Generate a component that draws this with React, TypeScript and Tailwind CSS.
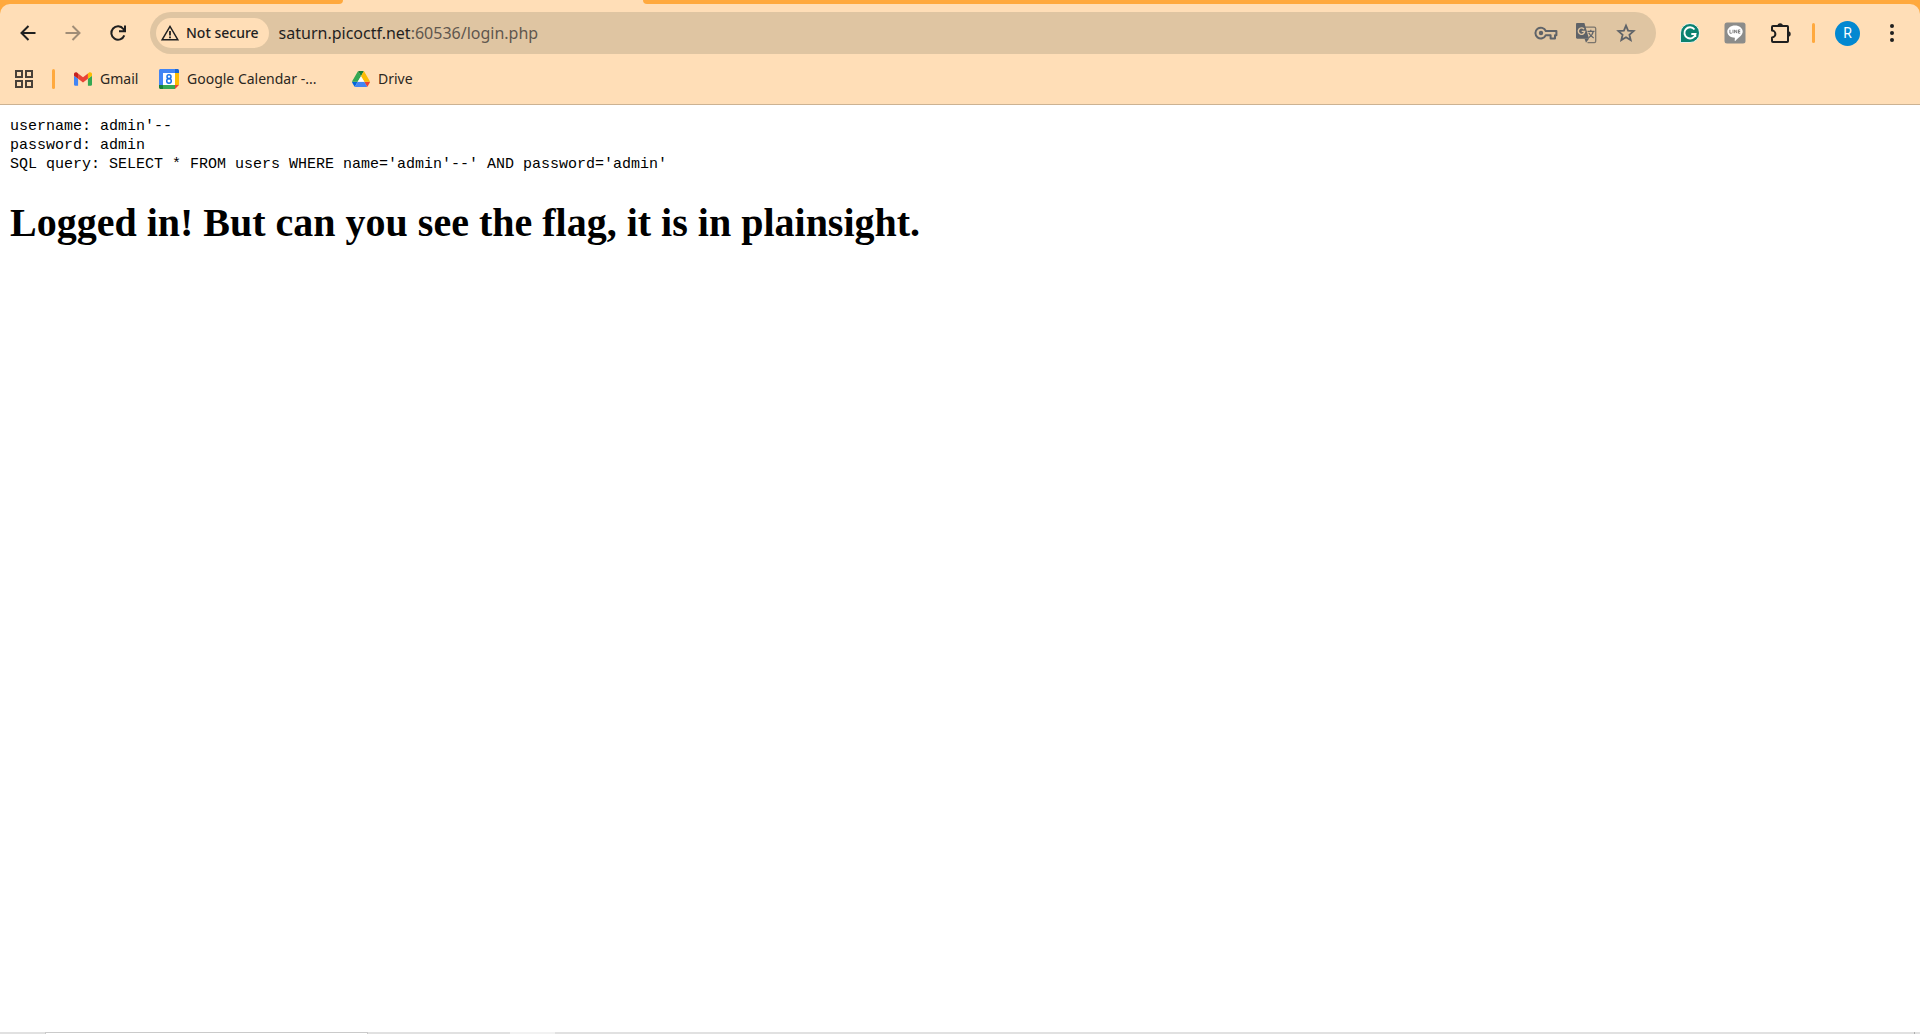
import type { ReactNode } from "react";

function IconButton({ label, className = "", children }: { label: string; className?: string; children: ReactNode }) {
  return (
    <button type="button" aria-label={label} className={`flex shrink-0 items-center justify-center ${className}`}>
      {children}
    </button>
  );
}

const BackIcon = () => (
  <svg width="20" height="20" viewBox="0 0 20 20" fill="none" stroke="#1f1f1f" strokeWidth="2">
    <path d="M17.500 10H3.500M10.500 3L3.500 10l7 7" />
  </svg>
);

const ForwardIcon = () => (
  <svg width="20" height="20" viewBox="0 0 20 20" fill="none" stroke="#a08d77" strokeWidth="2">
    <path d="M2.500 10h14M9.500 3l7 7-7 7" />
  </svg>
);

const ReloadIcon = () => (
  <svg width="20" height="20" viewBox="0 0 20 20" fill="none" stroke="#1f1f1f" strokeWidth="2">
    <path d="M16.300 12.400A6.700 6.700 0 1 1 15.400 6L16.600 8M17 2.500V8.200H11" />
  </svg>
);

const WarningIcon = () => (
  <svg width="20" height="20" viewBox="0 0 20 20" fill="none" stroke="#1f1f1f" strokeWidth="1.5">
    <path d="M2.200 16.700L10 3.400l7.800 13.300z" />
    <path d="M10 8v4.400M10 13.500v1.800" strokeWidth="1.8" />
  </svg>
);

const KeyIcon = () => (
  <svg width="24" height="20" viewBox="0 0 24 20" fill="none" stroke="#5f6368" strokeWidth="2">
    <path d="M11.800 8H22.400v4.200H21v3.200h-4.400v-3.200h-4.800A5.400 5.400 0 1 1 11.800 8z" strokeLinejoin="round" />
    <circle cx="7" cy="10" r="2.200" fill="#5f6368" stroke="none" />
  </svg>
);

const TranslateIcon = () => (
  <svg width="22" height="22" viewBox="0 0 22 22">
    <path d="M10 5.200h9.300c.8 0 1.400.6 1.400 1.400v12.600c0 .8-.6 1.400-1.400 1.400h-6.800" fill="none" stroke="#7b756c" strokeWidth="1.3" />
    <path d="M2.200 1h7.200l4.600 15.800H2.200C1.500 16.800 1 16.300 1 15.600V2.200C1 1.500 1.500 1 2.200 1z" fill="#5f6368" />
    <path d="M9.500 16.800h4.500l-3 4z" fill="#5f6368" />
    <path d="M9 7.100A3.200 3.200 0 1 0 9.700 9.400H6.700" fill="none" stroke="#dfc5a2" strokeWidth="1.4" />
    <path d="M12.500 9.300h7M15.800 7.800v1.500M18.300 9.300c-.5 2.700-2.500 5-4.700 6.400M13.700 10.800c1 2 2.900 3.900 5 5.200" fill="none" stroke="#5f6368" strokeWidth="1.2" />
  </svg>
);

const StarIcon = () => (
  <svg width="20" height="20" viewBox="0 0 20 20" fill="none" stroke="#5f6368" strokeWidth="1.8">
    <path d="M10 2.600l2.100 5.100 5.500.4-4.200 3.600 1.300 5.400L10 14.200l-4.700 2.900 1.300-5.400-4.200-3.600 5.500-.4z" />
  </svg>
);

const GrammarlyIcon = () => (
  <svg width="20" height="20" viewBox="0 0 20 20">
    <path d="M.5 19.500V10A9.500 9.500 0 1 1 10 19.500z" fill="#0b8270" stroke="#fff" strokeWidth=".8" />
    <path d="M14.500 6.500A5.600 5.600 0 1 0 15.500 11H11.300M15.300 10.200v3.800" fill="none" stroke="#fff" strokeWidth="1.9" />
  </svg>
);

const LineIcon = () => (
  <svg width="22" height="22" viewBox="0 0 22 22">
    <rect x=".5" y=".5" width="21" height="21" rx="2.500" fill="#8c8c8a" />
    <path d="M11 3.500c4.300 0 7.700 2.700 7.700 6.100 0 3.300-3.200 5.500-7.200 9.100-.5.400-.9.200-.8-.4l.2-2.500c-4.400 0-7.600-2.700-7.600-6.200s3.400-6.100 7.700-6.100z" fill="#fff" />
    <path d="M5.900 7.800v3.400h1.900M9 7.800v3.400M10.600 11.200V7.900l2.200 3.200V7.800M16.300 7.900h-1.800v3.300h1.800M14.500 9.500h1.700" fill="none" stroke="#777" strokeWidth=".9" />
  </svg>
);

const PuzzleIcon = () => (
  <svg width="22" height="22" viewBox="0 0 22 22">
    <path d="M3 4h14.200c.4 0 .8.400.8.800v14.400c0 .4-.4.800-.8.800H3c-.6 0-1-.4-1-1v-3.600a3.400 3.400 0 0 0 0-6.800V5c0-.6.400-1 1-1z" fill="none" stroke="#1f1f1f" strokeWidth="2" strokeLinejoin="round" />
    <path d="M7.500 4a2.700 2.700 0 0 1 5.400 0zM18 9.300a2.700 2.700 0 0 1 0 5.400z" fill="#1f1f1f" />
  </svg>
);

const MenuIcon = () => (
  <svg width="20" height="20" viewBox="0 0 20 20" fill="#1f1f1f">
    <circle cx="10" cy="3" r="2" />
    <circle cx="10" cy="10" r="2" />
    <circle cx="10" cy="17" r="2" />
  </svg>
);

const AppsIcon = () => (
  <svg width="18" height="18" viewBox="0 0 18 18" fill="none" stroke="#474039" strokeWidth="2">
    <path d="M1 1h6v6H1zM11 1h6v6h-6zM1 11h6v6H1zM11 11h6v6h-6z" />
  </svg>
);

const GmailIcon = () => (
  <svg width="18" height="14" viewBox="52 42 88 66">
    <path fill="#4285f4" d="M58 108h14V74L52 59v43c0 3.320 2.690 6 6 6" />
    <path fill="#34a853" d="M120 108h14c3.320 0 6-2.690 6-6V59l-20 15" />
    <path fill="#fbbc04" d="M120 48v26l20-15v-8c0-7.420-8.470-11.650-14.400-7.200" />
    <path fill="#ea4335" d="M72 74V48l24 18 24-18v26L96 92" />
    <path fill="#c5221f" d="M52 51v8l20 15V48l-5.600-4.200c-5.940-4.450-14.400-.22-14.400 7.200" />
  </svg>
);

const CalendarIcon = () => (
  <svg width="20" height="20" viewBox="0 0 20 20">
    <path d="M1.500 0H16v4H4v12H0V1.500C0 .7.700 0 1.500 0z" fill="#4285f4" />
    <path d="M16 0h2.500c.8 0 1.500.7 1.500 1.500V4h-4z" fill="#1967d2" />
    <path d="M16 4h4v12h-4z" fill="#fbbc04" />
    <path d="M4 16h12v4H4z" fill="#34a853" />
    <path d="M0 16h4v4H1.500C.7 20 0 19.300 0 18.500z" fill="#188038" />
    <path d="M16 16h4l-4 4z" fill="#ea4335" />
    <path d="M4 4h12v12H4z" fill="#fff" />
    <ellipse cx="10" cy="7.700" rx="2" ry="1.900" fill="none" stroke="#1a73e8" strokeWidth="1.5" />
    <ellipse cx="10" cy="12" rx="2.300" ry="2.200" fill="none" stroke="#1a73e8" strokeWidth="1.5" />
  </svg>
);

const DriveIcon = () => (
  <svg width="18" height="16" viewBox="0 0 87.300 78">
    <path d="m6.600 66.850 3.850 6.650c.8 1.400 1.950 2.500 3.300 3.300l13.750-23.800h-27.500c0 1.550.4 3.100 1.200 4.500z" fill="#0066da" />
    <path d="m43.650 25-13.750-23.800c-1.350.8-2.500 1.900-3.300 3.300l-25.400 44a9.060 9.060 0 0 0 -1.200 4.500h27.500z" fill="#34a853" />
    <path d="m73.550 76.800c1.350-.8 2.500-1.900 3.300-3.300l1.600-2.750 7.650-13.250c.8-1.400 1.200-2.950 1.200-4.500h-27.500l5.850 11.500z" fill="#ea4335" />
    <path d="m43.650 25 13.750-23.800c-1.350-.8-2.900-1.200-4.500-1.200h-18.500c-1.600 0-3.150.45-4.500 1.200z" fill="#188038" />
    <path d="m59.800 53h-32.300l-13.750 23.800c1.350.8 2.900 1.200 4.500 1.200h50.800c1.600 0 3.150-.45 4.500-1.200z" fill="#4285f4" />
    <path d="m73.400 26.500-12.700-22c-.8-1.400-1.950-2.500-3.300-3.300l-13.750 23.800 16.150 28h27.450c0-1.550-.4-3.100-1.200-4.500z" fill="#fbbc04" />
    <path d="M43.650 25L27.500 53h32.300z" fill="#fff" />
  </svg>
);

function TabStrip() {
  return (
    <div className="flex h-1 bg-[#ffdeb7]">
      <div className="w-[343px] rounded-br-[10px] bg-[#ffa93e]" />
      <div className="w-[300px]" />
      <div className="grow rounded-bl-[10px] bg-[#ffa93e]" />
    </div>
  );
}

function Toolbar() {
  return (
    <div className="flex h-[58px] items-center pr-[18px] pl-[18px]">
      <IconButton label="Back" className="mr-[25px] w-5"><BackIcon /></IconButton>
      <IconButton label="Forward" className="mr-[25px] w-5"><ForwardIcon /></IconButton>
      <IconButton label="Reload" className="mr-[22px] w-5"><ReloadIcon /></IconButton>
      <div className="flex h-[42px] grow items-center rounded-full bg-[#dfc5a2] pr-5 pl-1.5">
        <button type="button" className="flex h-[30px] shrink-0 items-center gap-1.5 rounded-full bg-[#ffdeb7] pr-2.5 pl-1 text-sm font-medium whitespace-nowrap text-[#1f1f1f]">
          <WarningIcon />
          Not secure
        </button>
        <a href="#" className="ml-2.5 grow text-base whitespace-nowrap text-[#5f574e]">
          <span className="text-[#1f1f1f]">saturn.picoctf.net</span>:60536/login.php
        </a>
        <IconButton label="Manage passwords" className="w-6"><KeyIcon /></IconButton>
        <IconButton label="Translate this page" className="ml-[17px] w-[22px]"><TranslateIcon /></IconButton>
        <IconButton label="Bookmark this tab" className="ml-[19px] w-5"><StarIcon /></IconButton>
      </div>
      <IconButton label="Grammarly" className="ml-6 w-5"><GrammarlyIcon /></IconButton>
      <IconButton label="LINE" className="ml-6 w-[22px]"><LineIcon /></IconButton>
      <IconButton label="Extensions" className="ml-6 w-[22px]"><PuzzleIcon /></IconButton>
      <div className="ml-5 h-5 w-[3px] rounded-full bg-[#ffa93e]" />
      <button type="button" aria-label="Profile" className="ml-5 flex size-[25px] shrink-0 items-center justify-center rounded-full bg-[#0288d1] font-[Roboto] text-sm text-white">
        R
      </button>
      <IconButton label="Menu" className="ml-[22px] w-5"><MenuIcon /></IconButton>
    </div>
  );
}

function Bookmark({ icon, label, className = "" }: { icon: ReactNode; label: string; className?: string }) {
  return (
    <a href="#" className={`flex items-center whitespace-nowrap ${className}`}>
      {icon}
      {label}
    </a>
  );
}

function BookmarksBar() {
  return (
    <nav className="flex h-[42px] items-center pb-2 pl-[15px] text-sm text-[#2b2621]">
      <IconButton label="Apps"><AppsIcon /></IconButton>
      <div className="mr-[19px] ml-[19px] h-5 w-[3px] rounded-full bg-[#ffa93e]" />
      <Bookmark icon={<GmailIcon />} label="Gmail" className="w-[85px] gap-2" />
      <Bookmark icon={<CalendarIcon />} label="Google Calendar -..." className="w-[193px] gap-2" />
      <Bookmark icon={<DriveIcon />} label="Drive" className="gap-2" />
    </nav>
  );
}

function BottomEdge() {
  return (
    <div className="flex h-0.5 bg-[#e1e1e1]">
      <div className="ml-[45px] w-[323px] border border-b-0 border-[#cacaca] bg-white" />
      <div className="ml-[142px] w-[45px] bg-[#f2f2f2]" />
      <div className="mr-[5px] ml-auto w-px bg-[#b0b0b0]" />
    </div>
  );
}

export default function App() {
  return (
    <div className="flex min-h-screen flex-col bg-white">
      <header className="bg-[#ffa93e] font-['Noto_Sans',sans-serif]">
        <TabStrip />
        <div className="rounded-t-[10px] border-b border-[#ccb292] bg-[#ffdeb7]">
          <Toolbar />
          <BookmarksBar />
        </div>
      </header>
      <main className="grow px-2.5 pt-3 text-black">
        <pre className="font-['Liberation_Mono',monospace] text-[15px] leading-[19px]">
          {`username: admin'--
password: admin
SQL query: SELECT * FROM users WHERE name='admin'--' AND password='admin'`}
        </pre>
        <h1 className="mt-[26px] font-['Liberation_Serif',serif] text-[40px] leading-[46px] font-bold">
          Logged in! But can you see the flag, it is in plainsight.
        </h1>
      </main>
      <BottomEdge />
    </div>
  );
}
